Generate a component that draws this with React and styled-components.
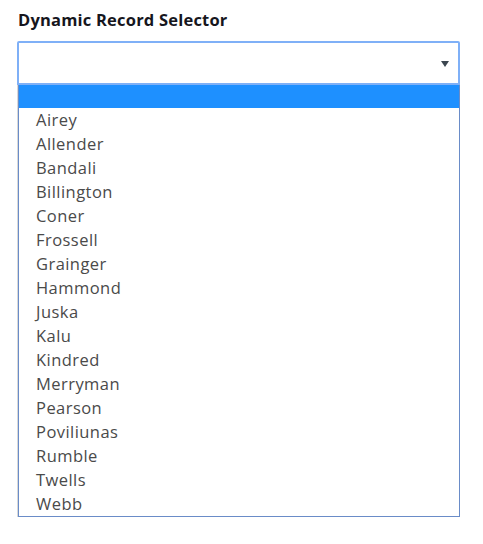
import styled, { createGlobalStyle } from "styled-components";

const GlobalStyle = createGlobalStyle`
  body {
    margin: 0;
    background: #ffffff;
    font-family: "Open Sans", Lato, sans-serif;
  }
`;

const Wrapper = styled.div`
  width: 443px;
  padding: 10px 0 0 17px;
`;

const Label = styled.div`
  font-size: 16.5px;
  font-weight: 700;
  letter-spacing: 0.2px;
  color: #16161d;
  line-height: 20px;
  padding-left: 1px;
  margin-bottom: 11px;
`;

const SelectBox = styled.div`
  box-sizing: border-box;
  height: 44px;
  border: 2px solid #7fb0f7;
  border-radius: 2px 2px 0 0;
  display: flex;
  align-items: center;
  justify-content: flex-end;
  padding-right: 9px;
`;

const Caret = styled.span`
  width: 0;
  height: 0;
  border-left: 4px solid transparent;
  border-right: 4px solid transparent;
  border-top: 6px solid #3c4650;
  margin-top: 2px;
`;

const List = styled.ul`
  list-style: none;
  margin: 0 0 0 1px;
  padding: 0;
  border: 1px solid #6a8cc8;
  border-top: none;
  box-shadow: -1px 0 0 #d8d8d8;
`;

const Option = styled.li`
  height: ${(p) => (p.$active ? "23px" : "24px")};
  line-height: 24px;
  padding-left: 17px;
  font-size: 16.5px;
  letter-spacing: 0.45px;
  color: #4a4a4a;
  background: ${(p) => (p.$active ? "#1e90ff" : "transparent")};
`;

const names = [
  "Airey",
  "Allender",
  "Bandali",
  "Billington",
  "Coner",
  "Frossell",
  "Grainger",
  "Hammond",
  "Juska",
  "Kalu",
  "Kindred",
  "Merryman",
  "Pearson",
  "Poviliunas",
  "Rumble",
  "Twells",
  "Webb",
];

const App = () => {
  return (
    <>
      <GlobalStyle />
      <Wrapper>
        <Label>Dynamic Record Selector</Label>
        <SelectBox>
          <Caret />
        </SelectBox>
        <List>
          <Option $active></Option>
          {names.map((n) => (
            <Option key={n}>{n}</Option>
          ))}
        </List>
      </Wrapper>
    </>
  );
};

export default App;
